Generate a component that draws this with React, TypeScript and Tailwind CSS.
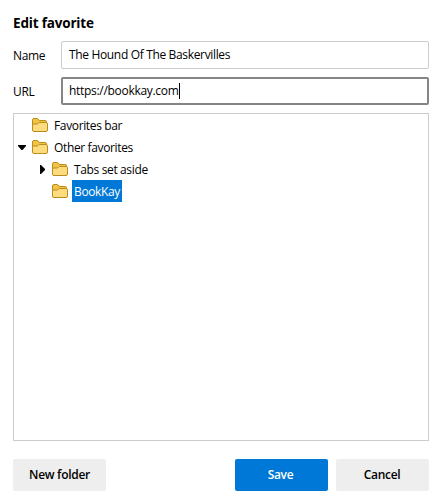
import React from "react";

function Folder() {
  return (
    <svg width="16" height="14" viewBox="0 0 16 14" className="shrink-0">
      <path
        d="M.5 11.5V2Q.5.5 2 .5h3.2q.6 0 1 .5l1.1 1.5h5.9q1.3 0 1.3 1.3v6"
        fill="#f2c443"
        stroke="#b98c1c"
      />
      <path
        d="M.5 12V7.2q0-1.2 1.2-1.2h3.1q.7 0 1.2-.5l.6-.6q.4-.4 1-.4h6.6q1.3 0 1.3 1.3V12q0 1.5-1.5 1.5H2Q.5 13.5.5 12z"
        fill="#fddc80"
        stroke="#b98c1c"
      />
    </svg>
  );
}

function Arrow({ open }: { open: boolean }) {
  return (
    <svg width="8" height="9" viewBox="0 0 8 9" className="shrink-0">
      <path d={open ? "M0 2h8v1L4.5 7h-1L0 3z" : "M2 0h1l4 4v1L3 9H2z"} fill="#000" />
    </svg>
  );
}

type RowProps = {
  label: string;
  nested?: boolean;
  arrow?: "open" | "closed";
  selected?: boolean;
};

function Row({ label, nested, arrow, selected }: RowProps) {
  return (
    <div className={`flex h-[22px] items-center ${nested ? "pl-6" : "pl-1"}`}>
      <span className="mr-1.5 flex w-2">{arrow && <Arrow open={arrow === "open"} />}</span>
      <Folder />
      <span
        className={`ml-1 h-[22px] px-0.5 leading-6 ${
          selected ? "bg-[#0078d7] text-white" : ""
        }`}
      >
        {label}
      </span>
    </div>
  );
}

export default function App() {
  return (
    <div className="flex h-[501px] w-[439px] flex-col bg-white pt-[13px] pr-2.5 pl-[13px] font-['Open_Sans','Noto_Sans',sans-serif] text-[12px] tracking-[-0.36px] text-black">
      <h1 className="h-5 text-[13.5px] leading-5 font-bold tracking-[-0.18px]">Edit favorite</h1>
      <div className="mt-2 flex h-7 items-center">
        <label className="w-12 pt-0.5">Name</label>
        <div className="h-7 flex-1 rounded-[2px] border border-[#ccc] px-[7px] leading-[26px] tracking-[-0.34px]">
          The Hound Of The Baskervilles
        </div>
      </div>
      <div className="mt-2 flex h-7 items-center">
        <label className="w-12 pt-0.5">URL</label>
        <div className="flex h-7 flex-1 items-center rounded-[2px] border-2 border-[#858585] px-1.5 tracking-[-0.3px]">
          <span>https://bookkay.com</span>
          <span className="h-4 w-px bg-black" />
        </div>
      </div>
      <div className="mt-2 h-[328px] border border-[#ccc]">
        <Row label="Favorites bar" />
        <Row label="Other favorites" arrow="open" />
        <Row label="Tabs set aside" nested arrow="closed" />
        <Row label="BookKay" nested selected />
      </div>
      <div className="mt-[18px] flex h-8 gap-2 font-semibold tracking-[-0.3px]">
        <button className="mr-auto w-[93px] rounded-[2px] bg-[#eee]">New folder</button>
        <button className="w-[93px] rounded-[2px] bg-[#0078d7] pr-0.5 text-white">Save</button>
        <button className="w-[93px] rounded-[2px] bg-[#eee] pr-px">Cancel</button>
      </div>
    </div>
  );
}
